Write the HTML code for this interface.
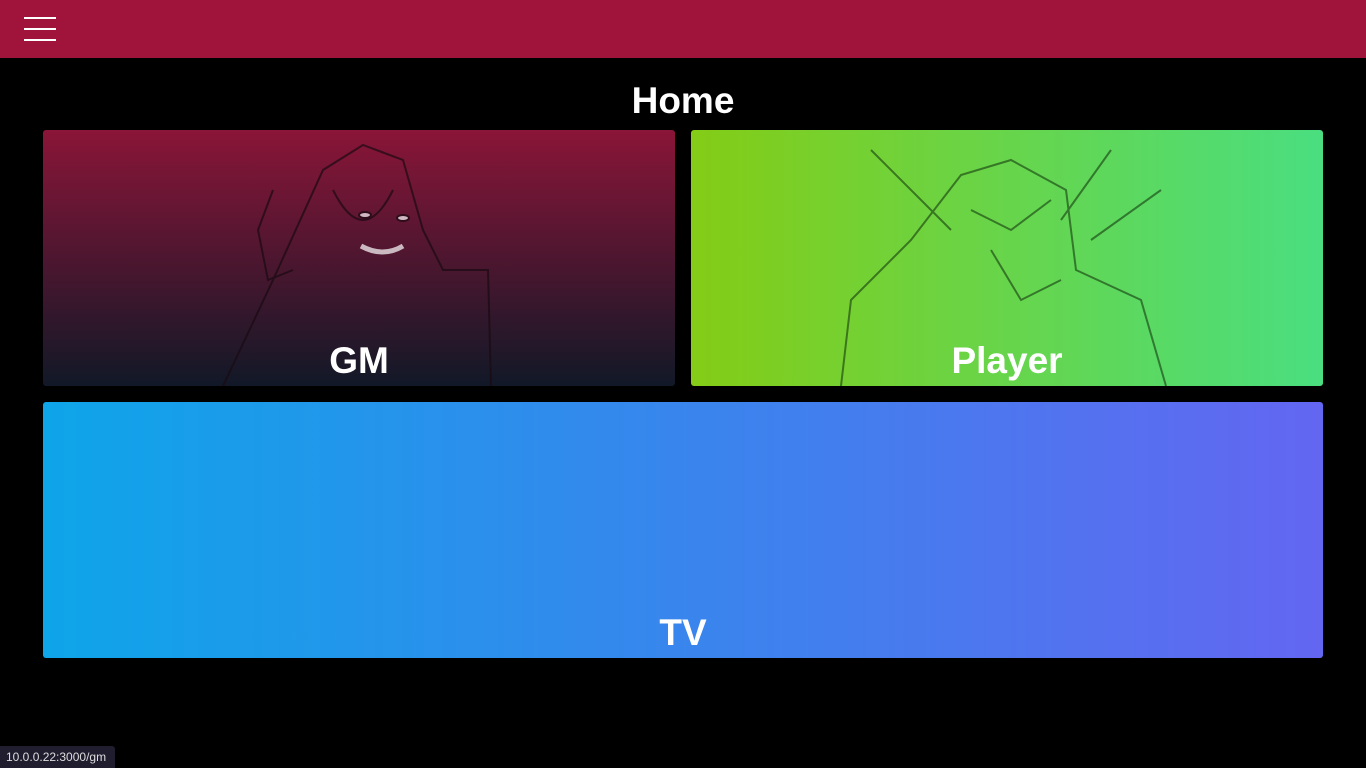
<!DOCTYPE html>
<html><head><style>
*{margin:0;padding:0;box-sizing:border-box}
body{width:1366px;height:768px;background:#000;overflow:hidden;font-family:"Liberation Sans",sans-serif;position:relative}
.hdr{height:58px;background:#a0133a;position:relative}
.hb{position:absolute;left:24px;width:32px;height:2px;background:#fff}
h1{position:absolute;top:80px;left:0;width:1366px;text-align:center;color:#fff;font-size:37px;font-weight:bold}
.card{position:absolute;border-radius:3px;color:#fff;font-weight:bold;font-size:37px;text-align:center;overflow:hidden}
.card span{position:absolute;bottom:4px;left:0;width:100%}
.st{position:absolute;left:0;top:746px;width:115px;height:22px;background:#1f1d2e;color:#ddd;font-size:12px;line-height:22px;padding-left:6px;border-top-right-radius:3px}
</style></head><body>
<div class="hdr"><div class="hb" style="top:17px"></div><div class="hb" style="top:28px"></div><div class="hb" style="top:39px"></div></div>
<h1>Home</h1>
<div class="card" style="left:43px;top:130px;width:632px;height:256px;background:linear-gradient(#8a1538,#111827)">
<svg width="632" height="256" style="position:absolute;left:0;top:0" fill="none" stroke="#1a0a12" stroke-width="2" opacity="0.7">
<path d="M180 256 L230 150 L280 40 L320 15 L360 30 L380 100 L400 140 L445 140 L448 256"/>
<path d="M290 60 Q320 120 350 60"/><path d="M230 60 L215 100 L225 150 L250 140"/>
<ellipse cx="322" cy="85" rx="6" ry="3" fill="#fff"/><ellipse cx="360" cy="88" rx="6" ry="3" fill="#fff"/>
<path d="M318 116 Q340 128 360 116" stroke="#fff" stroke-width="5"/>
</svg>
<span>GM</span></div>
<div class="card" style="left:691px;top:130px;width:632px;height:256px;background:linear-gradient(90deg,#84cc16,#4ade80)">
<svg width="632" height="256" style="position:absolute;left:0;top:0" fill="none" stroke="#143a10" stroke-width="2" opacity="0.6">
<path d="M150 256 L160 170 L220 110 L270 45 L320 30 L375 60 L385 140 L450 170 L475 256"/>
<path d="M280 80 L320 100 L360 70"/><path d="M300 120 L330 170 L370 150"/>
<path d="M180 20 L260 100 M420 20 L370 90 M470 60 L400 110"/>
</svg>
<span>Player</span></div>
<div class="card" style="left:43px;top:402px;width:1280px;height:256px;background:linear-gradient(90deg,#0ea5e9,#6366f1)"><span>TV</span></div>
<div class="st">10.0.0.22:3000/gm</div>
</body></html>
